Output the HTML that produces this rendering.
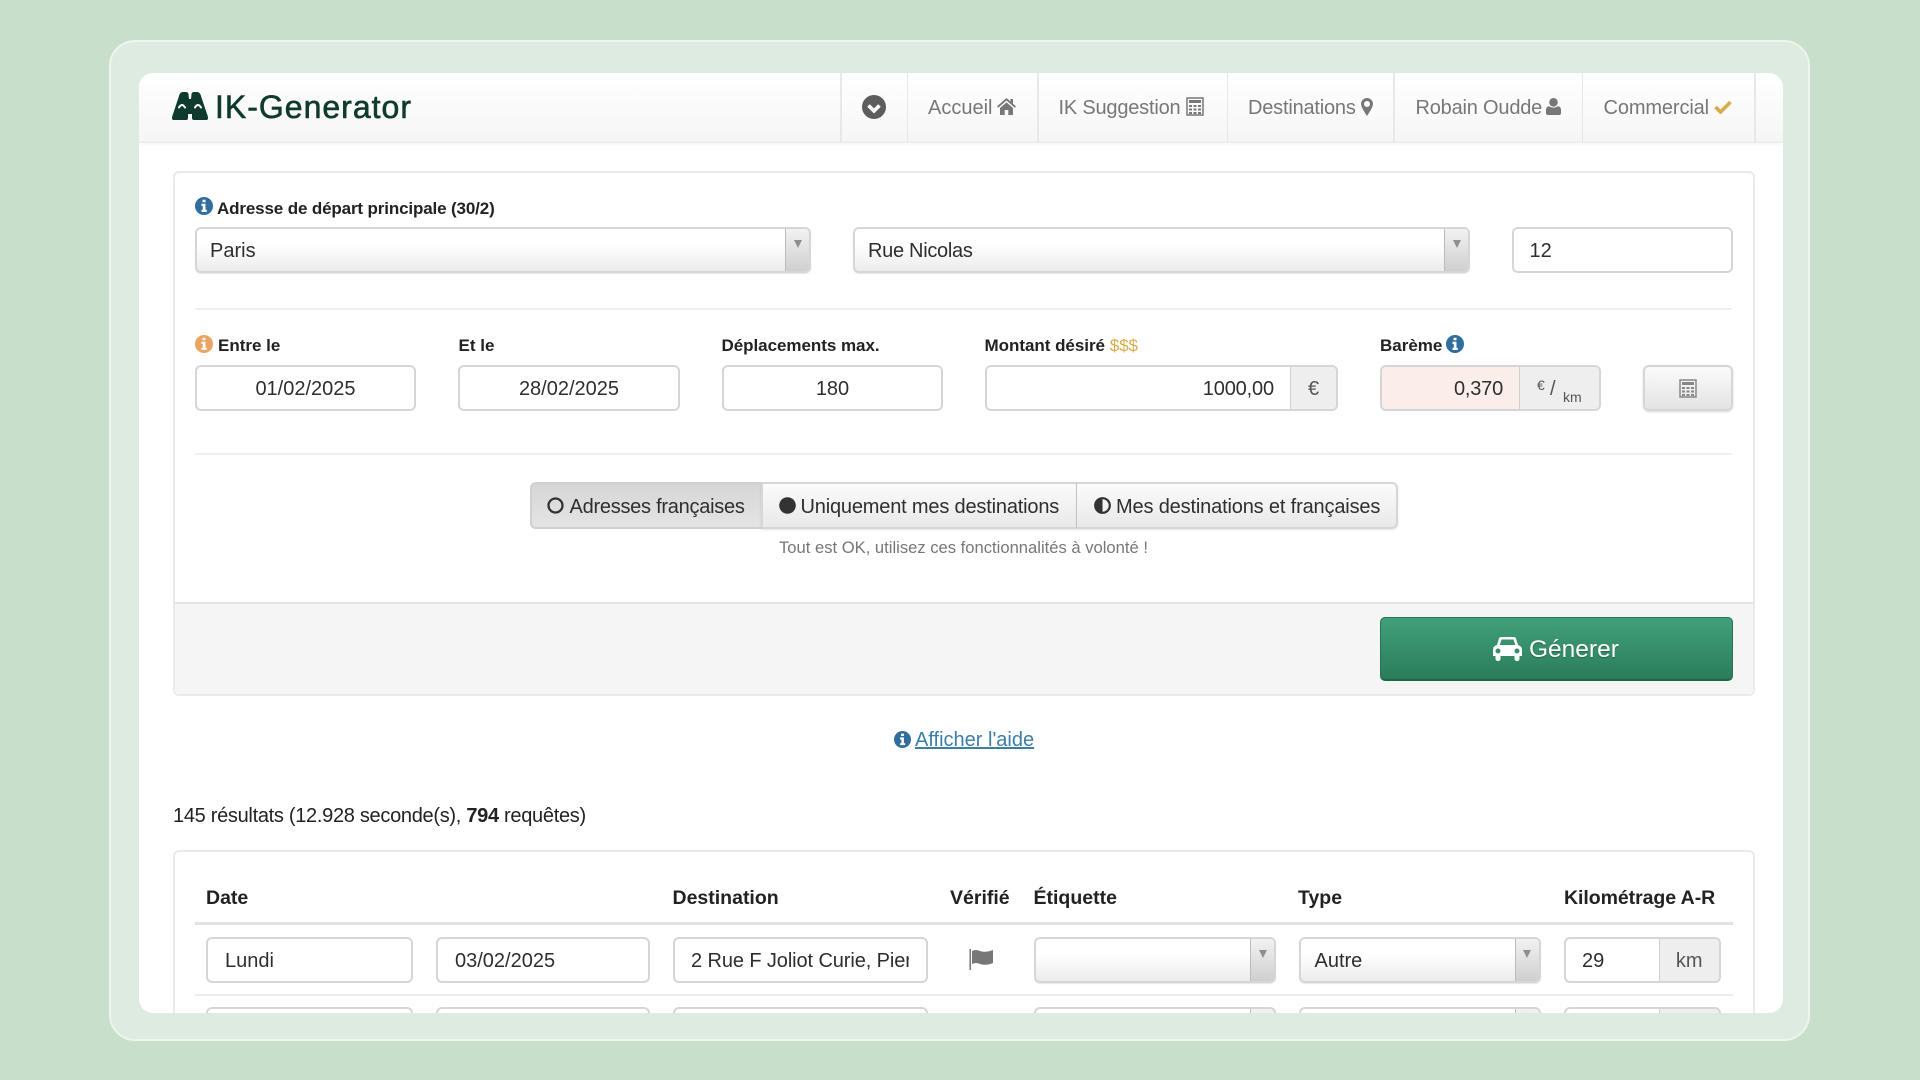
<!DOCTYPE html>
<html lang="fr"><head><meta charset="utf-8"><title>IK-Generator</title>
<style>
html,body{margin:0;padding:0;width:1920px;height:1080px;overflow:hidden;background:#c8e0cb;font-family:"Liberation Sans",sans-serif;color:#2e2e2e;font-size:20px}
*{box-sizing:border-box}
.a{position:absolute}
.t{position:absolute;white-space:nowrap;height:30px;line-height:30px;margin-top:1px}
.l{position:absolute;white-space:nowrap;height:24px;line-height:24px;font-weight:bold;font-size:17px;color:#222;margin-top:1px}
.i{position:absolute;height:46px;background:#fff;border:2px solid #d6d6d6;border-radius:6px;line-height:44px;white-space:nowrap;overflow:hidden}
.s{position:absolute;height:46px;border:2px solid #d6d6d6;border-radius:6px;background:linear-gradient(#fff 35%,#ececec);line-height:44px;overflow:hidden;box-shadow:0 1px 1px rgba(0,0,0,.1)}
.s b{position:absolute;right:0;top:0;bottom:0;width:24px;border-left:1.5px solid #bbb;background:linear-gradient(#f2f2f2,#cfcfcf)}
.s b:after{content:"";position:absolute;left:7.500px;top:11px;border-left:4px solid transparent;border-right:4px solid transparent;border-top:8px solid #8f8f8f}
.ad{position:absolute;top:0;bottom:0;right:0;background:#eee;border-left:1.5px solid #d0d0d0;text-align:center;color:#555}
.hr{position:absolute;height:2px;background:#f0f0f0}
.nd{position:absolute;top:73px;width:1.5px;height:70px;background:#e8e8e8}
svg{position:absolute;display:block}
.h{font-weight:bold;font-size:19.500px;color:#222}
</style></head><body>
<div class="a" style="left:109px;top:40px;width:1701px;height:1001px;background:#deebe0;border:2px solid #edf5ee;border-radius:26px"></div>
<div class="a" style="left:139px;top:73px;width:1644px;height:940px;background:#fff;border-radius:14px;overflow:hidden">
<div class="a" style="left:-139px;top:-73px;width:1920px;height:1080px;overflow:hidden">

<div class="a" style="left:139px;top:73px;width:1644px;height:70px;background:linear-gradient(#fff,#f6f6f6);border-bottom:2px solid #eeeeee;box-shadow:0 2px 3px rgba(0,0,0,.03)"></div>
<svg style="left:172px;top:92px" width="36" height="28" viewBox="0 0 36 28"><path fill="#0f3a2e" d="M1.500 28Q0 28 0 26Q0 24 1 22L7 4Q8 0 11 0H14Q16 0 16.500 2L17 7H19L19.500 2Q20 0 22 0H25Q28 0 29 4L35 22Q36 24 36 26Q36 28 34.500 28H22Q20 28 20 26V22H16V26Q16 28 14 28Z"/><path d="M7 15.500Q10 10.500 13 15.500M23 15.500Q26 10.500 29 15.500" fill="none" stroke="#fff" stroke-width="2" stroke-linecap="round"/></svg>
<div class="t" style="left:215px;top:89px;height:34px;line-height:34px;font-size:32px;letter-spacing:1px;color:#0f3a2e;-webkit-text-stroke:.6px #0f3a2e">IK-Generator</div>

<div class="nd" style="left:840px"></div><div class="nd" style="left:906.500px"></div><div class="nd" style="left:1037px"></div><div class="nd" style="left:1226.500px"></div><div class="nd" style="left:1393px"></div><div class="nd" style="left:1581.500px"></div><div class="nd" style="left:1754px"></div>
<svg style="left:862px;top:95px" width="24" height="24" viewBox="0 0 24 24"><circle cx="12" cy="12" r="12" fill="#5d5d5d"/><path d="M6.500 10.500L12 16L17.500 10.500" fill="none" stroke="#fff" stroke-width="3.600"/></svg>
<div class="t" style="left:928px;top:92px;color:#777">Accueil</div>
<svg style="left:997px;top:98px" width="19" height="17" viewBox="0 0 19 17"><path fill="#777" d="M9.500 0L13.500 3.500V1H16V5.700L19 8.400L17.800 9.700L9.500 2.500L1.200 9.700L0 8.400ZM3 10L9.500 4.400L16 10V17H11.300V12H7.700V17H3Z"/></svg>
<div class="t" style="left:1058.500px;top:92px;color:#777;letter-spacing:-.2px">IK Suggestion</div>
<svg style="left:1186px;top:97px" width="18" height="19" viewBox="0 0 18 19"><path fill="none" stroke="#777" stroke-width="1.500" d="M1 1H17V18H1Z"/><path fill="#777" d="M3 3H15V6H3ZM3 8H6V10H3ZM7.500 8H10.500V10H7.500ZM12 8H15V10H12ZM3 11.500H6V13.500H3ZM7.500 11.500H10.500V13.500H7.500ZM12 11.500H15V13.500H12ZM3 15H6V17H3ZM7.500 15H10.500V17H7.500ZM12 15H15V17H12Z"/></svg>
<div class="t" style="left:1248px;top:92px;color:#777;letter-spacing:-.2px">Destinations</div>
<svg style="left:1361px;top:98px" width="12" height="18" viewBox="0 0 12 18"><path fill-rule="evenodd" fill="#777" d="M6 0A6 6 0 0 1 12 6C12 9 8 15 6 18C4 15 0 9 0 6A6 6 0 0 1 6 0ZM6 3A3 3 0 1 0 6 9A3 3 0 1 0 6 3Z"/></svg>
<div class="t" style="left:1415.500px;top:92px;color:#777;letter-spacing:-.2px">Robain Oudde</div>
<svg style="left:1546px;top:98px" width="15" height="17" viewBox="0 0 15 17"><circle cx="7.500" cy="4.300" r="4.300" fill="#777"/><path fill="#777" d="M0 15V12Q0 8.500 3 8.200Q7.500 11 12 8.200Q15 8.500 15 12V15Q15 17 13 17H2Q0 17 0 15Z"/></svg>
<div class="t" style="left:1603.500px;top:92px;color:#777;letter-spacing:-.12px">Commercial</div>
<svg style="left:1714px;top:100px" width="18" height="14" viewBox="0 0 18 14"><path d="M1.500 7L6.500 12L16.500 2" fill="none" stroke="#d8ab48" stroke-width="3.600"/></svg>

<div class="a" style="left:173px;top:171px;width:1582px;height:525px;border:2px solid #eaeaea;border-radius:6px"></div>
<svg style="left:195px;top:197px" width="18" height="18" viewBox="0 0 18 18"><circle cx="9" cy="9" r="9" fill="#2f6e9e"/><path fill="#fff" d="M7.500 2.800H10.500V5.300H7.500ZM6.500 6.800H10.500V12.800H11.800V15H6.500V12.800H7.800V9H6.500Z"/></svg>
<div class="l" style="left:217px;top:196px;letter-spacing:-.14px">Adresse de départ principale (30/2)</div>
<div class="s" style="left:195px;top:227px;width:616px;padding-left:13px">Paris<b></b></div>
<div class="s" style="left:853px;top:227px;width:617px;padding-left:13px;letter-spacing:-.3px">Rue Nicolas<b></b></div>
<div class="i" style="left:1511.500px;top:227px;width:221px;padding-left:16px">12</div>
<div class="hr" style="left:195px;top:308px;width:1537px"></div>

<svg style="left:195px;top:335px" width="18" height="18" viewBox="0 0 18 18"><circle cx="9" cy="9" r="9" fill="#eba45f"/><path fill="#fff" d="M7.500 2.800H10.500V5.300H7.500ZM6.500 6.800H10.500V12.800H11.800V15H6.500V12.800H7.800V9H6.500Z"/></svg>
<div class="l" style="left:218px;top:333px">Entre le</div>
<div class="l" style="left:458.500px;top:333px">Et le</div>
<div class="l" style="left:721.500px;top:333px;letter-spacing:-.04px">Déplacements max.</div>
<div class="l" style="left:984.500px;top:333px;letter-spacing:-.03px">Montant désiré <span style="color:#d8ab48;font-weight:normal">$$$</span></div>
<div class="l" style="left:1380px;top:333px">Barème</div>
<svg style="left:1446px;top:335px" width="18" height="18" viewBox="0 0 18 18"><circle cx="9" cy="9" r="9" fill="#2f6e9e"/><path fill="#fff" d="M7.500 2.800H10.500V5.300H7.500ZM6.500 6.800H10.500V12.800H11.800V15H6.500V12.800H7.800V9H6.500Z"/></svg>

<div class="i" style="left:195px;top:365px;width:221px;text-align:center">01/02/2025</div>
<div class="i" style="left:458px;top:365px;width:222px;text-align:center">28/02/2025</div>
<div class="i" style="left:722px;top:365px;width:221px;text-align:center">180</div>
<div class="i" style="left:985px;top:365px;width:353px;padding-right:62px;text-align:right;letter-spacing:-.15px">1000,00<div class="ad" style="width:46px;letter-spacing:0">€</div></div>
<div class="i" style="left:1380px;top:365px;width:221px;padding-right:96px;text-align:right;letter-spacing:-.2px;background:#fbeeea">0,370<div class="ad" style="width:80px;font-size:0;letter-spacing:0"><span class="a" style="left:17px;top:-4px;font-size:14px">€</span><span class="a" style="left:30px;top:0;font-size:20px">/</span><span class="a" style="left:43px;top:8px;font-size:14px">km</span></div></div>
<div class="a" style="left:1642.500px;top:365px;width:90px;height:46px;border:2px solid #d6d6d6;border-radius:6px;background:linear-gradient(#fbfbfb,#e3e3e3);box-shadow:0 1px 2px rgba(0,0,0,.15)"></div>
<svg style="left:1678.500px;top:379px" width="18" height="19" viewBox="0 0 18 19"><path fill="none" stroke="#888" stroke-width="1.500" d="M1 1H17V18H1Z"/><path fill="#888" d="M3 3H15V6H3ZM3 8H6V10H3ZM7.500 8H10.500V10H7.500ZM12 8H15V10H12ZM3 11.500H6V13.500H3ZM7.500 11.500H10.500V13.500H7.500ZM12 11.500H15V13.500H12ZM3 15H6V17H3ZM7.500 15H10.500V17H7.500ZM12 15H15V17H12Z"/></svg>
<div class="hr" style="left:195px;top:453px;width:1537px"></div>

<div class="a" style="left:530px;top:482px;width:231px;height:47px;background:linear-gradient(#d6d6d6,#e4e4e4);border:2px solid #d0d0d0;border-right:0;border-radius:6px 0 0 6px"></div>
<div class="a" style="left:761px;top:482px;width:316px;height:47px;background:linear-gradient(#fbfbfb,#e9e9e9);border:2px solid #d6d6d6;border-right:1.500px solid #c8c8c8;box-shadow:0 1px 2px rgba(0,0,0,.1)"></div>
<div class="a" style="left:1077px;top:482px;width:321px;height:47px;background:linear-gradient(#fbfbfb,#e9e9e9);border:2px solid #d6d6d6;border-left:0;border-radius:0 6px 6px 0;box-shadow:0 1px 2px rgba(0,0,0,.1)"></div>
<svg style="left:547px;top:497px" width="17" height="17" viewBox="0 0 17 17"><circle cx="8.500" cy="8.500" r="7" fill="none" stroke="#333" stroke-width="2.300"/></svg>
<div class="t" style="left:569.500px;top:491px;letter-spacing:-.26px">Adresses françaises</div>
<svg style="left:779px;top:497px" width="17" height="17" viewBox="0 0 17 17"><circle cx="8.500" cy="8.500" r="8.300" fill="#333"/></svg>
<div class="t" style="left:800.500px;top:491px;letter-spacing:-.18px">Uniquement mes destinations</div>
<svg style="left:1094px;top:497px" width="17" height="17" viewBox="0 0 17 17"><circle cx="8.500" cy="8.500" r="7.300" fill="none" stroke="#333" stroke-width="2.200"/><path d="M8.500 1A7.500 7.500 0 0 0 8.500 16Z" fill="#333"/></svg>
<div class="t" style="left:1116px;top:491px;letter-spacing:-.16px">Mes destinations et françaises</div>
<div class="t" style="left:779px;top:532px;font-size:16.600px;color:#777">Tout est OK, utilisez ces fonctionnalités à volonté !</div>

<div class="a" style="left:175px;top:602px;width:1578px;height:92px;background:#f5f5f5;border-top:2px solid #e4e4e4;border-radius:0 0 5px 5px"></div>
<div class="a" style="left:1380px;top:617px;width:352.500px;height:64px;border-radius:5px;background:linear-gradient(#41a07a,#2b7c5b);border:1px solid #257353;border-bottom:2px solid #1e6648"></div>
<svg style="left:1493px;top:637px" width="29" height="24" viewBox="0 0 29 24"><path fill-rule="evenodd" fill="#fff" d="M6 1.500Q6.500 0 8.500 0H20.500Q22.500 0 23 1.500L25 8Q29 9 29 13V19H26.500V21.500Q26.500 24 24 24Q21.500 24 21.500 21.500V19H7.500V21.500Q7.500 24 5 24Q2.500 24 2.500 21.500V19H0V13Q0 9 4 8ZM8.500 2.500L6.700 8H22.300L20.500 2.500ZM5 11.500A2.500 2.500 0 1 0 5 16.500A2.500 2.500 0 1 0 5 11.500ZM24 11.500A2.500 2.500 0 1 0 24 16.500A2.500 2.500 0 1 0 24 11.500Z"/></svg>
<div class="t" style="left:1529px;top:634px;font-size:24.500px;color:#fff;text-shadow:0 1px 1px rgba(0,0,0,.3)">Génerer</div>

<svg style="left:894px;top:731px" width="17" height="17" viewBox="0 0 18 18"><circle cx="9" cy="9" r="9" fill="#2f6e9e"/><path fill="#fff" d="M7.500 2.800H10.500V5.300H7.500ZM6.500 6.800H10.500V12.800H11.800V15H6.500V12.800H7.800V9H6.500Z"/></svg>
<div class="t" style="left:915px;top:724px;color:#3b7ea6;text-decoration:underline">Afficher l'aide</div>
<div class="t" style="left:173px;top:800px;color:#222;letter-spacing:-.3px">145 résultats (12.928 seconde(s), <b>794</b> requêtes)</div>

<div class="a" style="left:173px;top:850px;width:1582px;height:220px;border:2px solid #eaeaea;border-radius:6px"></div>
<div class="t h" style="left:206px;top:882px">Date</div>
<div class="t h" style="left:672.500px;top:882px">Destination</div>
<div class="t h" style="left:950px;top:882px">Vérifié</div>
<div class="t h" style="left:1033.500px;top:882px">Étiquette</div>
<div class="t h" style="left:1298px;top:882px">Type</div>
<div class="t h" style="left:1564px;top:882px;letter-spacing:-.06px">Kilométrage A-R</div>
<div class="a" style="left:195px;top:922px;width:1537.500px;height:2.500px;background:#e3e3e3"></div>

<div class="i" style="left:206px;top:937px;width:207px;padding-left:17px">Lundi</div>
<div class="i" style="left:436px;top:937px;width:214px;padding-left:17px">03/02/2025</div>
<div class="i" style="left:673px;top:937px;width:255px;padding:0 17px 0 16px"><span style="display:block;overflow:hidden;letter-spacing:-.1px">2 Rue F Joliot Curie, Pierre-Bénite</span></div>
<svg style="left:969px;top:949px" width="24" height="21" viewBox="0 0 24 21"><path fill="#777" d="M0.500 0H2V21H0.500Z"/><path fill="#777" d="M3 2Q7 0 11 2Q16 4 24 1V14Q17 17 11 15Q7 13 3 15Z"/></svg>
<div class="s" style="left:1033.500px;top:937px;width:242.500px">&nbsp;<b></b></div>
<div class="s" style="left:1298.500px;top:937px;width:242px;padding-left:14px">Autre<b></b></div>
<div class="i" style="left:1564px;top:937px;width:157px;padding-left:16px">29<div class="ad" style="width:60.500px">km</div></div>
<div class="hr" style="left:195px;top:994px;width:1537.500px;background:#ececec"></div>

<div class="i" style="left:206px;top:1007px;width:207px"></div>
<div class="i" style="left:436px;top:1007px;width:214px"></div>
<div class="i" style="left:673px;top:1007px;width:255px"></div>
<div class="s" style="left:1033.500px;top:1007px;width:242.500px"><b></b></div>
<div class="s" style="left:1298.500px;top:1007px;width:242px"><b></b></div>
<div class="i" style="left:1564px;top:1007px;width:157px"><div class="ad" style="width:60.500px"></div></div>

</div></div>
</body></html>
